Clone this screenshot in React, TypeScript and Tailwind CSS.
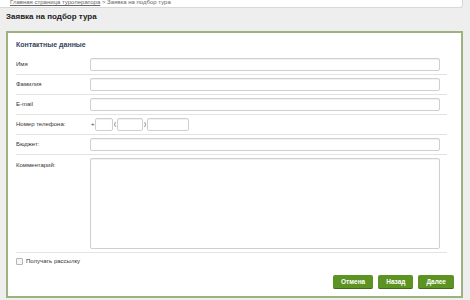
import React from 'react';

const inputCls =
  'h-[13px] border border-[#cfcfcf] rounded-[2px] bg-white shadow-[inset_0_1px_1px_rgba(0,0,0,0.06)] outline-none';

function Row({ label, children, top }: { label: string; children: React.ReactNode; top?: boolean }) {
  return (
    <div className={`flex ${top ? 'items-start' : 'items-center'} py-[3px] border-b border-[#e3e3e3]`}>
      <div className={`w-[74px] shrink-0 text-[6px] text-[#333] ${top ? 'pt-[3px]' : ''}`}>{label}</div>
      {children}
    </div>
  );
}

export default function App() {
  return (
    <div className="w-[470px] h-[300px] overflow-hidden bg-[#eeeeee] font-['Liberation_Sans',Arial,sans-serif]">
      {/* breadcrumb strip */}
      <div className="w-[463px] h-[8px] overflow-hidden bg-white border-b border-r border-[#d8d8d8] rounded-br-[3px] pl-[10px]">
        <div className="-mt-[2px] text-[6px] leading-[8px] text-[#666]">
          <span className="underline">Главная страница туроператора</span>
          <span> &gt; Заявка на подбор тура</span>
        </div>
      </div>

      <h1 className="ml-[6px] mt-[4px] text-[8px] leading-[10px] font-bold text-[#222]">Заявка на подбор тура</h1>

      <div className="ml-[6px] mt-[9px] w-[457px] border-2 border-[#9eb27f] bg-white pl-[8px] pr-[14px] pt-[8px] pb-[7px]">
        <div className="text-[7px] leading-[8px] font-bold text-[#34445e]">Контактные данные</div>

        <div className="mt-[6px]">
          <Row label="Имя">
            <input className={`${inputCls} w-[350px]`} />
          </Row>
          <Row label="Фамилия">
            <input className={`${inputCls} w-[350px]`} />
          </Row>
          <Row label="E-mail">
            <input className={`${inputCls} w-[350px]`} />
          </Row>
          <Row label="Номер телефона:">
            <div className="flex items-center text-[6px] text-[#333]">
              <span className="w-[5px] pl-[1px]">+</span>
              <input className={`${inputCls} w-[18px]`} />
              <span className="w-[4px] text-center">(</span>
              <input className={`${inputCls} w-[26px]`} />
              <span className="w-[4px] text-center">)</span>
              <input className={`${inputCls} w-[42px]`} />
            </div>
          </Row>
          <Row label="Бюджет:">
            <input className={`${inputCls} w-[350px]`} />
          </Row>
          <Row label="Комментарий:" top>
            <textarea className={`${inputCls} w-[350px] h-[91px] resize-none`} />
          </Row>
        </div>

        <label className="mt-[4px] flex items-center gap-[3px] text-[6px] text-[#333]">
          <span className="w-[7px] h-[7px] border border-[#b5b5b5] rounded-[1px] bg-[#f7f7f7]" />
          Получать рассылку
        </label>

        <div className="mt-[9px] -mr-[7px] flex justify-end gap-[5px]">
          {['Отмена', 'Назад', 'Далее'].map((t) => (
            <button
              key={t}
              className="h-[14px] px-[8px] rounded-[2px] bg-[#5c9322] border-b border-[#3f6a14] text-white text-[6.5px] font-bold leading-[13px]"
            >
              {t}
            </button>
          ))}
        </div>
      </div>
    </div>
  );
}
